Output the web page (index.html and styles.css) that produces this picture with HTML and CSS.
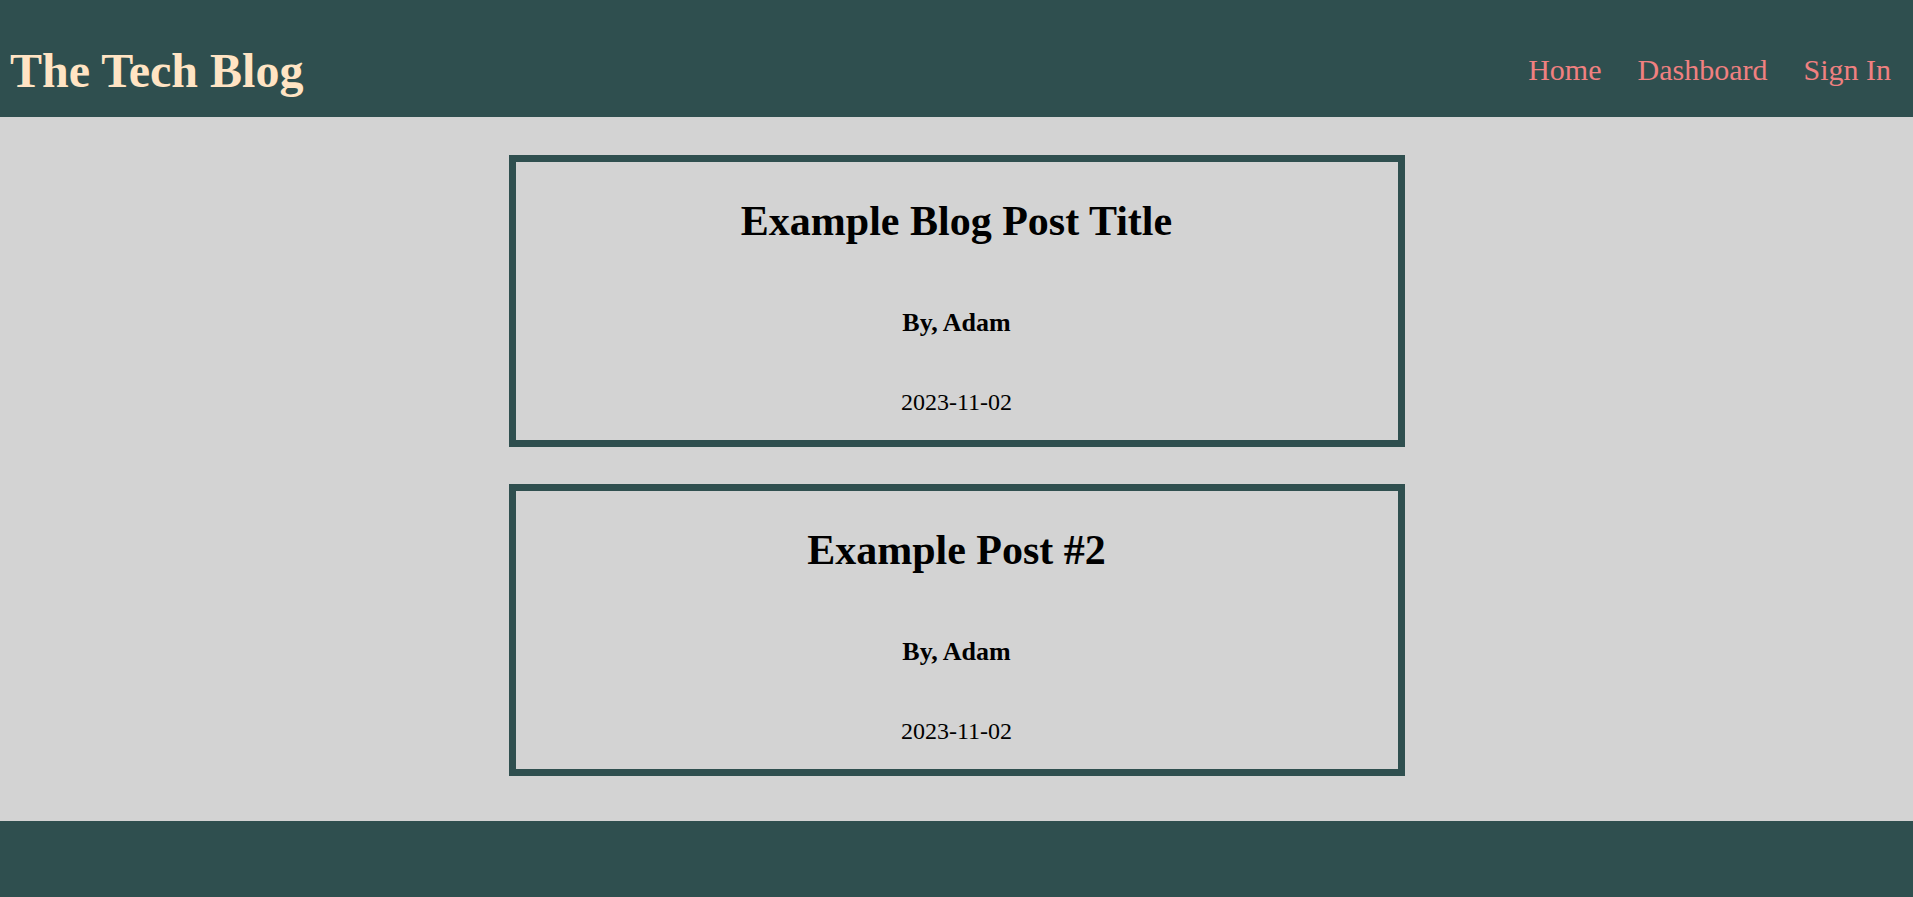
FILE: index.html
```html
<!DOCTYPE html>
<html lang="en">
<head>
<meta charset="utf-8">
<title>The Tech Blog</title>
<link rel="stylesheet" href="styles.css">
</head>
<body>
<header class="site-header">
  <h1 class="site-title">The Tech Blog</h1>
  <nav class="site-nav">
    <a class="nav-link" href="#">Home</a>
    <a class="nav-link" href="#">Dashboard</a>
    <a class="nav-link" href="#">Sign In</a>
  </nav>
</header>
<main class="posts">
  <article class="post-card">
    <h2 class="post-title">Example Blog Post Title</h2>
    <h3 class="post-author">By, Adam</h3>
    <p class="post-date">2023-11-02</p>
  </article>
  <article class="post-card">
    <h2 class="post-title">Example Post #2</h2>
    <h3 class="post-author">By, Adam</h3>
    <p class="post-date">2023-11-02</p>
  </article>
</main>
<footer class="site-footer"></footer>
</body>
</html>
```

FILE: styles.css
```css
* {
  box-sizing: border-box;
}

html, body {
  margin: 0;
  padding: 0;
}

body {
  min-height: 100vh;
  display: flex;
  flex-direction: column;
  background: #d3d3d3;
  font-family: "Liberation Serif", "Times New Roman", serif;
  color: #000;
}

.site-header {
  height: 117px;
  flex-shrink: 0;
  background: #2f4f4f;
  display: flex;
  align-items: center;
  justify-content: space-between;
  padding: 24px 22px 0 10px;
}

.site-title {
  margin: 0;
  font-size: 48px;
  font-weight: bold;
  color: #ffe4c4;
}

.site-nav {
  display: flex;
  gap: 36px;
  margin-bottom: 2px;
}

.nav-link {
  font-size: 30px;
  color: #f08080;
  text-decoration: none;
}

.posts {
  flex: 1;
  display: flex;
  flex-direction: column;
  align-items: center;
  gap: 37px;
  padding-top: 38px;
}

.post-card {
  width: 896px;
  height: 292px;
  border: 7px solid #2f4f4f;
  display: flex;
  flex-direction: column;
  align-items: center;
  padding-top: 35px;
  text-align: center;
}

.post-title {
  margin: 0;
  font-size: 42px;
  font-weight: bold;
}

.post-author {
  margin: 63px 0 0;
  font-size: 26px;
  font-weight: bold;
}

.post-date {
  margin: 51px 0 0;
  font-size: 24px;
}

.site-footer {
  height: 76px;
  flex-shrink: 0;
  background: #2f4f4f;
}
```
